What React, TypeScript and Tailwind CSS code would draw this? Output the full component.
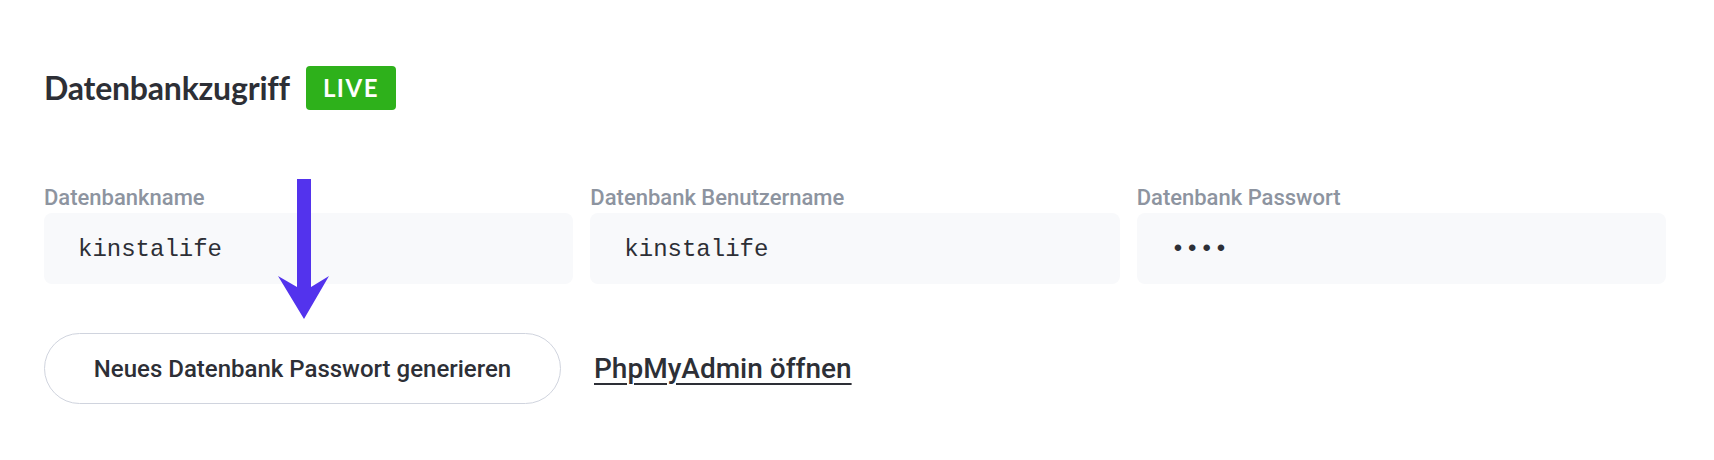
import React from 'react'

const fields = [
  { label: 'Datenbankname', value: 'kinstalife' },
  { label: 'Datenbank Benutzername', value: 'kinstalife' },
  { label: 'Datenbank Passwort', value: '••••' },
]

function DownArrow() {
  return (
    <svg
      className="absolute left-[276px] top-[177px]"
      width="56"
      height="145"
      viewBox="0 0 56 145"
      aria-hidden
    >
      <polygon points="21,2 35,2 35,110 53,99 28,142 2,99 21,110" fill="#5333ed" />
    </svg>
  )
}

export default function App() {
  return (
    <div className="relative h-[460px] w-full bg-white pl-[44px] pt-[66px] font-['Roboto',sans-serif]">
      {/* Header */}
      <div className="flex h-[44px] items-center gap-4">
        <h2 className="font-['Lato',sans-serif] text-[32px] font-bold leading-none tracking-[-0.2px] text-[#2d2f36]">
          Datenbankzugriff
        </h2>
        <span className="flex h-[44px] items-center rounded-[4px] bg-[#2eb11b] px-[17px] font-['Lato',sans-serif] text-[24px] font-bold tracking-[1.5px] text-white">
          LIVE
        </span>
      </div>

      {/* Fields */}
      <div className="mt-[75px] grid w-[1622px] grid-cols-3 gap-x-[17px]">
        {fields.map((f) => (
          <div key={f.label} className="flex flex-col gap-[2px]">
            <span className="text-[22px] leading-[26px] font-medium text-[#8d94a0]">{f.label}</span>
            <div className="flex h-[71px] items-center rounded-lg bg-[#f8f9fb] pl-[34px] pt-[2px] font-['Liberation_Mono',monospace] text-[24px] text-[#2d2f36]">
              {f.value}
            </div>
          </div>
        ))}
      </div>

      {/* Actions */}
      <div className="mt-[49px] flex items-center gap-[33px]">
        <button className="h-[71px] w-[517px] rounded-full border-[1.5px] border-[#d0d4de] bg-white text-[24px] font-medium text-[#2d2f36]">
          Neues Datenbank Passwort generieren
        </button>
        <a href="#" className="text-[28px] font-medium text-[#2d2f36] underline decoration-2 underline-offset-[5px]">
          PhpMyAdmin öffnen
        </a>
      </div>

      <DownArrow />
    </div>
  )
}
